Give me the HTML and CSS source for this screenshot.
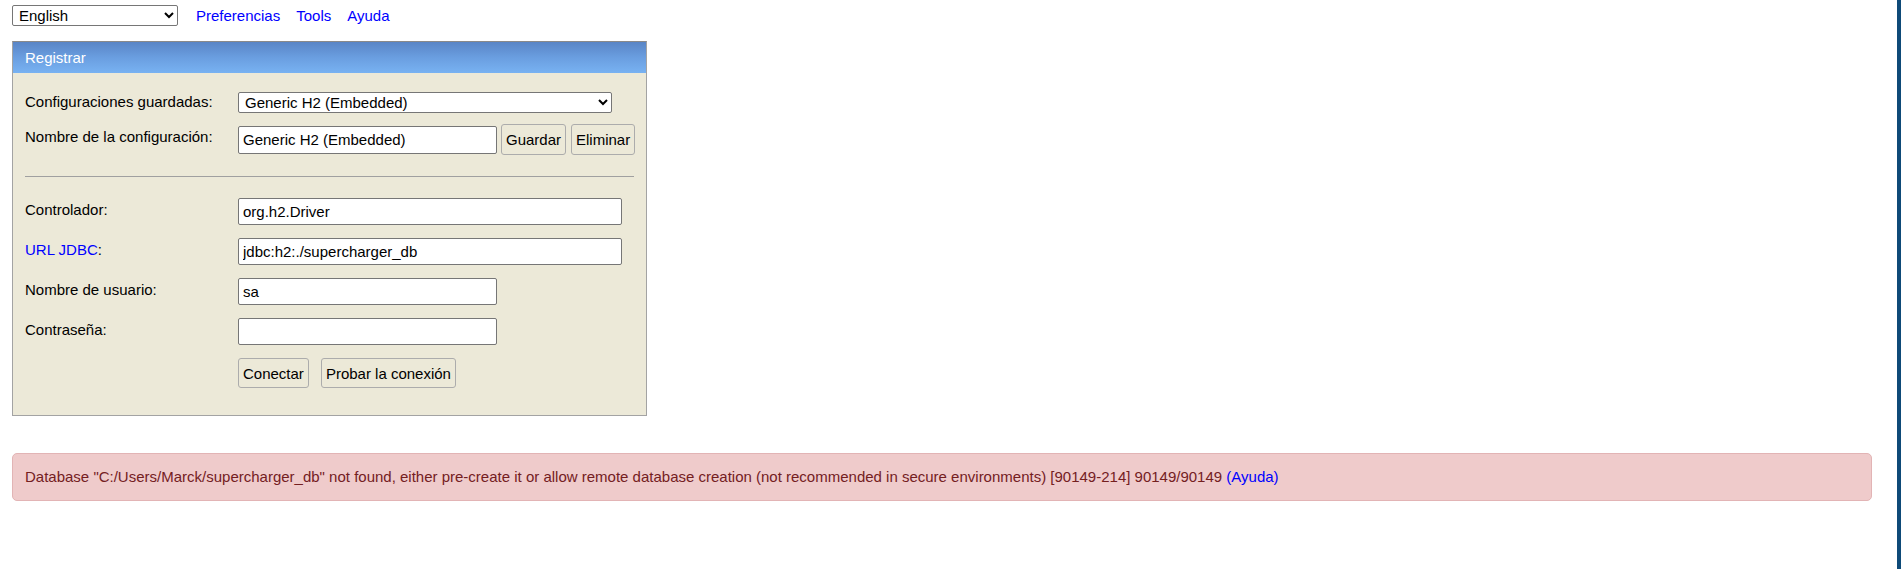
FILE: index.html
```html
<!DOCTYPE html>
<html lang="es">
<head>
<meta charset="utf-8">
<title>H2 Console</title>
<link rel="stylesheet" href="styles.css">
</head>
<body>
<div class="topbar">
  <select class="lang"><option>English</option></select>
  <nav class="toplinks">
    <a href="#">Preferencias</a>
    <a href="#">Tools</a>
    <a href="#">Ayuda</a>
  </nav>
</div>

<div class="panel">
  <div class="panel-head">Registrar</div>
  <div class="panel-body">
    <div class="row row-saved">
      <label class="lbl">Configuraciones guardadas:</label>
      <select class="saved"><option>Generic H2 (Embedded)</option></select>
    </div>
    <div class="row row-name">
      <label class="lbl">Nombre de la configuración:</label>
      <div class="controls">
        <input class="field short" type="text" value="Generic H2 (Embedded)">
        <button class="btn btn-tight">Guardar</button>
        <button class="btn btn-tight">Eliminar</button>
      </div>
    </div>
    <hr class="sep">
    <div class="row">
      <label class="lbl">Controlador:</label>
      <input class="field long" type="text" value="org.h2.Driver">
    </div>
    <div class="row">
      <label class="lbl"><a href="#" class="lbl-link">URL JDBC</a>:</label>
      <input class="field long" type="text" value="jdbc:h2:./supercharger_db">
    </div>
    <div class="row">
      <label class="lbl">Nombre de usuario:</label>
      <input class="field short" type="text" value="sa">
    </div>
    <div class="row">
      <label class="lbl">Contraseña:</label>
      <input class="field short" type="password" value="">
    </div>
    <div class="row row-actions">
      <span class="lbl"></span>
      <div class="controls actions">
        <button class="btn">Conectar</button>
        <button class="btn">Probar la conexión</button>
      </div>
    </div>
  </div>
</div>

<div class="error">Database "C:/Users/Marck/supercharger_db" not found, either pre-create it or allow remote database creation (not recommended in secure environments) [90149-214] 90149/90149 <a href="#">(Ayuda)</a></div>
</body>
</html>
```

FILE: styles.css
```css
html {
  box-sizing: border-box;
  min-height: 100vh;
  border-right: 4px solid #0e4a78;
  background: #ffffff;
}

*, *::before, *::after {
  box-sizing: border-box;
}

body {
  margin: 0;
  padding: 5px 25px 20px 12px;
  font-family: "Liberation Sans", Arial, sans-serif;
  font-size: 15px;
  color: #000;
}

a {
  color: #0000ff;
  text-decoration: none;
}

.topbar {
  display: flex;
  align-items: center;
  height: 21px;
}

.lang {
  width: 166px;
  height: 21px;
  font-family: "Liberation Sans", Arial, sans-serif;
  font-size: 15px;
  padding: 0 2px;
  border: 1px solid #767676;
  border-radius: 2px;
  background: #fff;
  color: #000;
}

.toplinks {
  display: flex;
  gap: 16px;
  margin-left: 18px;
  font-size: 15px;
}

.panel {
  width: 635px;
  margin-top: 15px;
  border: 1px solid #a3a3a3;
  border-top-color: #8a8a8a;
  background: #ece9d8;
}

.panel-head {
  height: 31px;
  padding-left: 12px;
  display: flex;
  align-items: center;
  color: #ffffff;
  font-size: 15px;
  background: linear-gradient(to bottom, #5985c6 0%, #6a9ee0 50%, #78b2f2 100%);
}

.panel-body {
  padding: 19px 12px 27px 12px;
}

.row {
  display: flex;
  align-items: flex-start;
  margin-bottom: 13px;
}

.lbl {
  flex: 0 0 213px;
  padding-top: 3px;
  line-height: 17px;
}

.row-saved {
  margin-bottom: 11px;
}

.row-saved .lbl {
  padding-top: 1px;
}

.saved {
  width: 374px;
  height: 21px;
  font-family: "Liberation Sans", Arial, sans-serif;
  font-size: 15px;
  padding: 0 2px;
  border: 1px solid #767676;
  border-radius: 2px;
  background: #fff;
  color: #000;
}

.row-name {
  margin-bottom: 0;
  align-items: flex-start;
}

.row-name .lbl {
  padding-top: 4px;
}

.controls {
  display: flex;
  align-items: center;
  gap: 5px;
}

.row-name .controls {
  height: 31px;
}

.field {
  height: 27px;
  padding: 1px 4px;
  font-family: "Liberation Sans", Arial, sans-serif;
  font-size: 15px;
  color: #000;
  background: #fff;
  border: 1px solid #767676;
  border-radius: 2px;
}

.row-name .field {
  height: 28px;
  margin-right: -1px;
}

.short {
  width: 259px;
}

.long {
  width: 384px;
}

.lbl-link {
  color: #0000ff;
}

.sep {
  margin: 21px 0 21px 0;
  border: 0;
  border-top: 1px solid #a0a0a0;
  height: 0;
}

.btn {
  height: 30px;
  padding: 0 4px;
  font-family: "Liberation Sans", Arial, sans-serif;
  font-size: 15px;
  color: #000;
  background: #ece9d8;
  border: 1px solid #acacac;
  border-radius: 3px;
}

.btn-tight {
  height: 31px;
  padding: 0 4px;
}

.row-actions {
  margin-top: 13px;
  margin-bottom: 0;
}

.actions {
  gap: 12px;
}

.error {
  margin-top: 37px;
  padding: 14px 12px;
  line-height: 18px;
  font-size: 15px;
  color: #74201f;
  background: #efcbcb;
  border: 1px solid #e2b4b5;
  border-radius: 5px;
}

.error a {
  color: #0000ff;
}
```
